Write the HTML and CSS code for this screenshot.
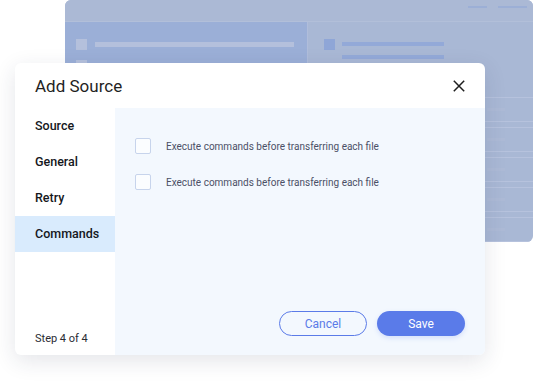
FILE: index.html
```html
<!DOCTYPE html>
<html lang="en">
<head>
  <meta charset="UTF-8">
  <title>Add Source</title>
  <link rel="stylesheet" href="styles.css">
</head>
<body>
  <div class="app">
    <div class="app-top">
      <span class="dash dash-short"></span>
      <span class="dash"></span>
    </div>
    <div class="app-body">
      <div class="app-side">
        <div class="side-item"><span class="sq"></span><span class="bar"></span></div>
        <div class="side-item"><span class="sq"></span><span class="bar"></span></div>
      </div>
      <div class="app-main">
        <div class="main-head">
          <span class="sq sq-dark"></span>
          <div class="head-lines">
            <span class="line"></span>
            <span class="line"></span>
          </div>
        </div>
        <div class="rows">
          <div class="row"><span class="cell"></span><span class="cell cell-small"></span></div>
          <div class="row"><span class="cell"></span><span class="cell cell-small"></span></div>
          <div class="row"><span class="cell"></span><span class="cell cell-small"></span></div>
          <div class="row"><span class="cell"></span><span class="cell cell-small"></span></div>
          <div class="row"><span class="cell"></span><span class="cell cell-small"></span></div>
        </div>
      </div>
    </div>
  </div>

  <div class="dialog">
    <div class="dialog-header">
      <h2 class="dialog-title">Add Source</h2>
      <svg class="close" width="12" height="12" viewBox="0 0 12 12">
        <path d="M0.8 0.8 L11.2 11.2 M11.2 0.8 L0.8 11.2" stroke="#1e1e1e" stroke-width="1.5" fill="none"/>
      </svg>
    </div>
    <div class="dialog-body">
      <div class="steps">
        <div class="step">Source</div>
        <div class="step">General</div>
        <div class="step">Retry</div>
        <div class="step active">Commands</div>
        <div class="step-count">Step 4 of 4</div>
      </div>
      <div class="content">
        <label class="option">
          <span class="checkbox"></span>
          <span>Execute commands before transferring each file</span>
        </label>
        <label class="option">
          <span class="checkbox"></span>
          <span>Execute commands before transferring each file</span>
        </label>
        <div class="actions">
          <button class="btn btn-cancel">Cancel</button>
          <button class="btn btn-save">Save</button>
        </div>
      </div>
    </div>
  </div>
</body>
</html>
```

FILE: styles.css
```css
* {
  box-sizing: border-box;
}

body {
  margin: 0;
  padding: 0;
  font-family: 'Roboto', 'Liberation Sans', sans-serif;
  background: #ffffff;
  position: relative;
  width: 535px;
  height: 381px;
  overflow: hidden;
}

/* background app window */
.app {
  margin-left: 65px;
  width: 468px;
  height: 242px;
  border-radius: 6px;
  overflow: hidden;
  background: #a9b8d5;
  display: flex;
  flex-direction: column;
}

.app-top {
  height: 22px;
  background: #abb9d5;
  border-bottom: 1px solid #b2bfd9;
  display: flex;
  justify-content: flex-end;
  align-items: flex-start;
  gap: 11px;
  padding: 6px 6px 0 0;
}

.dash {
  width: 29px;
  height: 2px;
  background: #9cafd6;
}

.dash-short {
  width: 19px;
}

.app-body {
  flex: 1;
  display: flex;
}

.app-side {
  width: 243px;
  background: #9bafd7;
  border-right: 1px solid #b0bddb;
  padding: 17px 11px;
  display: flex;
  flex-direction: column;
  gap: 10px;
}

.side-item {
  display: flex;
  align-items: center;
  gap: 8px;
}

.sq {
  width: 11px;
  height: 11px;
  background: #b4c0dc;
}

.sq-dark {
  background: #8fa6d7;
}

.bar {
  width: 199px;
  height: 5px;
  background: #b4c0dc;
}

.app-main {
  flex: 1;
  padding-top: 17px;
  display: flex;
  flex-direction: column;
}

.main-head {
  display: flex;
  align-items: flex-start;
  gap: 7px;
  padding-left: 16px;
}

.head-lines {
  display: flex;
  flex-direction: column;
  gap: 9px;
  padding-top: 3px;
}

.line {
  width: 102px;
  height: 4px;
  background: #93a9d8;
}

.rows {
  margin-top: 38px;
  display: flex;
  flex-direction: column;
  gap: 5px;
}

.row {
  height: 25px;
  border-top: 1px solid #b6c2dd;
  border-bottom: 1px solid #b6c2dd;
  display: flex;
  align-items: center;
  justify-content: space-between;
  padding: 0 28px 0 20px;
}

.cell {
  width: 120px;
  height: 3px;
  background: #adbad6;
}

.cell-small {
  width: 18px;
}

/* dialog */
.dialog {
  position: absolute;
  left: 15px;
  top: 63px;
  width: 470px;
  height: 292px;
  background: #ffffff;
  border-radius: 6px;
  overflow: hidden;
  box-shadow: 0 6px 22px rgba(30, 40, 70, 0.12);
  display: flex;
  flex-direction: column;
}

.dialog-header {
  height: 45px;
  padding: 0 20px;
  display: flex;
  align-items: center;
  justify-content: space-between;
}

.dialog-title {
  margin: 0;
  font-size: 17px;
  font-weight: 400;
  color: #1f1f1f;
}

.dialog-body {
  flex: 1;
  display: flex;
}

.steps {
  width: 100px;
  display: flex;
  flex-direction: column;
}

.step {
  height: 36px;
  line-height: 36px;
  padding-left: 20px;
  font-size: 12.5px;
  font-weight: 500;
  color: #15171c;
}

.step.active {
  background: #d9ebfd;
}

.step-count {
  margin-top: auto;
  padding: 0 0 10px 20px;
  font-size: 11px;
  line-height: 13px;
  color: #2a2c33;
}

.content {
  flex: 1;
  background: #f3f8fe;
  padding: 20px 20px 19px 20px;
  display: flex;
  flex-direction: column;
}

.option {
  height: 36px;
  display: flex;
  align-items: center;
  gap: 15px;
  font-size: 10px;
  color: #4b5066;
}

.checkbox {
  width: 16px;
  height: 16px;
  border: 1px solid #c7d4ec;
  border-radius: 2px;
  background: #fbfdff;
}

.actions {
  margin-top: auto;
  display: flex;
  justify-content: flex-end;
  gap: 10px;
}

.btn {
  width: 88px;
  height: 25px;
  border-radius: 13px;
  font-family: 'Roboto', 'Liberation Sans', sans-serif;
  font-size: 12px;
  cursor: pointer;
}

.btn-cancel {
  background: transparent;
  border: 1px solid #5b7be8;
  color: #5b7be8;
}

.btn-save {
  background: #5a7be9;
  border: none;
  color: #ffffff;
  box-shadow: 0 2px 5px rgba(90, 123, 233, 0.2);
}
```
